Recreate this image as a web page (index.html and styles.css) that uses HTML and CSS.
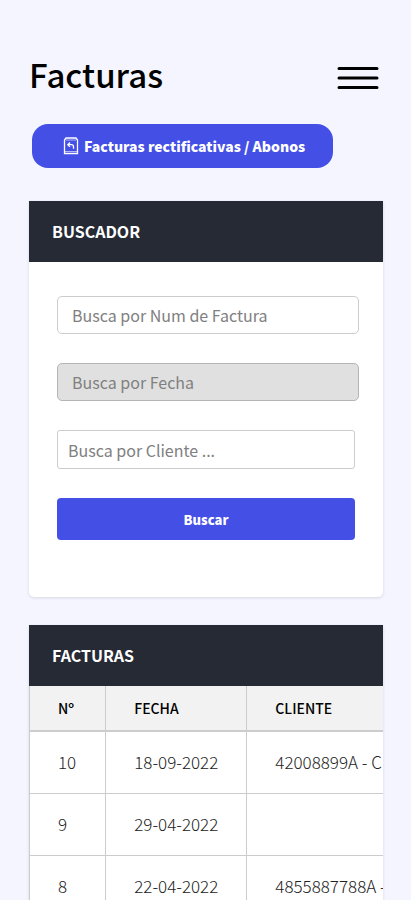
FILE: index.html
```
<!DOCTYPE html>
<html lang="es">
<head>
    <meta charset="UTF-8">
    <meta name="viewport" content="width=device-width, initial-scale=1.0">
    <title>Facturas</title>
    <link rel="stylesheet" href="styles.css">
</head>
<body>

    <header class="top">
        <h1>Facturas</h1>
        <button type="button" class="menu" aria-label="Menú">
            <svg width="42" height="24" viewBox="0 0 42 24" stroke="#000" stroke-width="3" stroke-linecap="round">
                <path d="M2 2.5h38M2 12h38M2 21.5h38"/>
            </svg>
        </button>
    </header>

    <a href="#" class="btn-abonos">
        <svg width="16" height="18" viewBox="0 0 16 18" fill="none" stroke="#fff">
            <path d="M1.500 16.500V3l1.500-2h10l1.500 2v13.500z" stroke-width="1.300"/>
            <path d="M1.500 14.500h13M3 3h10" stroke-width="1" opacity=".6"/>
            <path d="M7 5.500L4.800 7.700 7 9.900M5 7.700h3.500q2 0 2 2v2" stroke-width="1.300"/>
        </svg>
        Facturas rectificativas / Abonos
    </a>

    <section class="card">
        <h2>Buscador</h2>
        <form class="search">
            <input type="text" class="field wide" aria-label="Número de factura" placeholder="Busca por Num de Factura">
            <input type="text" class="field wide date" aria-label="Fecha" placeholder="Busca por Fecha" readonly>
            <input type="text" class="field client" aria-label="Cliente" placeholder="Busca por Cliente ...">
            <button type="submit" class="btn-search">Buscar</button>
        </form>
    </section>

    <section class="card">
        <h2>Facturas</h2>
        <div class="table-wrap">
            <table>
                <thead>
                    <tr><th>Nº</th><th>Fecha</th><th>Cliente</th></tr>
                </thead>
                <tbody>
                    <tr><td>10</td><td>18-09-2022</td><td>42008899A - Cliente</td></tr>
                    <tr><td>9</td><td>29-04-2022</td><td></td></tr>
                    <tr><td>8</td><td>22-04-2022</td><td>4855887788A - Cliente</td></tr>
                </tbody>
            </table>
        </div>
    </section>

</body>
</html>
```

FILE: styles.css
```
* {
    box-sizing: border-box;
}
body {
    margin: 0;
    padding: 52px 28px 0 29px;
    background: #f5f5ff;
    color: #000;
    font-family: "Noto Sans CJK SC", "Noto Sans", sans-serif;
    font-size: 16px;
    line-height: 24px;
}
input, button {
    font-family: inherit;
}
.top {
    display: flex;
    justify-content: space-between;
    align-items: center;
    padding-right: 4px;
}
h1 {
    margin: 0;
    padding-bottom: 4px;
    font-size: 33px;
    font-weight: 500;
    line-height: 44px;
}
.menu {
    display: flex;
    padding: 4px 0 0;
    border: 0;
    background: none;
    cursor: pointer;
}
.btn-abonos {
    display: inline-flex;
    align-items: center;
    gap: 5px;
    height: 44px;
    margin: 24px 0 33px 3px;
    padding: 0 28px 0 31px;
    border-radius: 16px;
    background: #444fe6;
    color: #fff;
    font-weight: 900;
    font-size: 14px;
    text-decoration: none;
    white-space: nowrap;
}
.card {
    margin-bottom: 28px;
    border-radius: 0 0 5px 5px;
    background: #fff;
    box-shadow: 0 1px 3px rgba(40, 40, 80, 0.15);
}
h2 {
    margin: 0;
    padding: 18px 23px;
    background: #262a35;
    color: #fff;
    font-size: 16px;
    font-weight: 700;
    line-height: 25px;
    text-transform: uppercase;
}
.search {
    display: flex;
    flex-direction: column;
    gap: 29px;
    padding: 34px 28px 57px;
}
.field {
    height: 38px;
    padding: 0 14px;
    border: 1px solid #ccc;
    border-radius: 5px;
    background: #fff;
    font-size: 16px;
    font-weight: 400;
}
.field::placeholder {
    color: #808080;
}
.wide {
    width: calc(100% + 4px);
}
.date {
    background: #e0e0e0;
    border-color: #b5b5b5;
}
.client {
    height: 39px;
    padding: 0 10px;
    border-radius: 3px;
}
.btn-search {
    height: 42px;
    border: 0;
    border-radius: 4px;
    background: #444fe6;
    color: #fff;
    font-size: 13px;
    font-weight: 900;
    cursor: pointer;
}
.table-wrap {
    overflow-x: auto;
}
table {
    border-collapse: collapse;
    white-space: nowrap;
}
th, td {
    padding: 0 28px;
    border: 1px solid #ccc;
    text-align: left;
}
th:first-child, td:first-child {
    padding-right: 29px;
}
th {
    height: 45px;
    background: #f2f2f2;
    border-top: 0;
    border-bottom: 2px solid #ccc;
    font-size: 14px;
    font-weight: 500;
    text-transform: uppercase;
}
td {
    height: 62px;
    font-size: 17px;
    font-weight: 300;
    color: #222;
}
```
